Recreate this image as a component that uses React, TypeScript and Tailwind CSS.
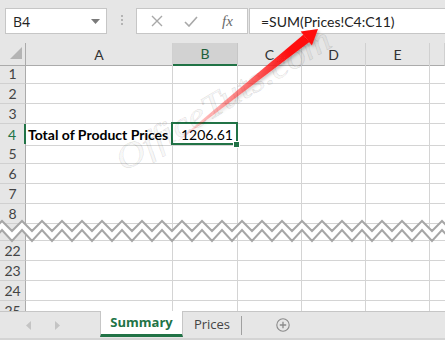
import React from "react";

const GRID = "grid grid-cols-[26px_147px_65px_64px_64px_64px_1fr]";
const cellFont = { fontFamily: "Lato, 'Liberation Sans', sans-serif" };
const uiFont = { fontFamily: "'Open Sans', 'Noto Sans', sans-serif" };

function Row({ label, h = "h-[20px]", children, selected = false, hideLabel = false }: { label: string; h?: string; children?: React.ReactNode; selected?: boolean; hideLabel?: boolean }) {
  return (
    <div className={`${GRID} ${h}`}>
      <div
        className={`flex items-center justify-center bg-[#e6e6e6] border-b border-b-[#d0d0d0] ${
          selected ? "border-r-2 border-r-[#217346] text-[#217346]" : "border-r border-r-[#ababab] text-[#444]"
        } text-[14px] leading-none`}
        style={cellFont}
      >
        {hideLabel ? "" : label}
      </div>
      {children ?? (
        <>
          <div className="border-r border-b border-[#d4d4d4]" />
          <div className="border-r border-b border-[#d4d4d4]" />
          <div className="border-r border-b border-[#d4d4d4]" />
          <div className="border-r border-b border-[#d4d4d4]" />
          <div className="border-r border-b border-[#d4d4d4]" />
          <div className="border-b border-[#d4d4d4]" />
        </>
      )}
    </div>
  );
}

function Zigzag() {
  const up: string[] = [];
  const lo: string[] = [];
  for (let x = -18; x <= 465; x += 20) {
    up.push(`${x},5`, `${x + 10},15`);
    lo.push(`${x},14`, `${x + 10},25`);
  }
  const loRev = [...lo].reverse();
  return (
    <svg className="absolute left-0 top-[216px] pointer-events-none" width="445" height="30" viewBox="0 0 445 30">
      <polygon points={[...up, ...loRev].join(" ")} fill="#ffffff" />
      <polyline points={up.join(" ")} fill="none" stroke="#a6a6a6" strokeWidth="2" />
      <polyline points={lo.join(" ")} fill="none" stroke="#a6a6a6" strokeWidth="2" />
    </svg>
  );
}

function Overlay() {
  return (
    <svg className="absolute left-0 top-0 pointer-events-none" width="445" height="340" viewBox="0 0 445 340">
      <defs>
        <linearGradient id="ag" gradientUnits="userSpaceOnUse" x1="178" y1="141" x2="318" y2="29">
          <stop offset="0" stopColor="#ff0000" stopOpacity="0.05" />
          <stop offset="0.45" stopColor="#ff2020" stopOpacity="0.55" />
          <stop offset="0.8" stopColor="#ff1010" stopOpacity="1" />
          <stop offset="1" stopColor="#ff0000" stopOpacity="1" />
        </linearGradient>
        <filter id="sh" x="-20%" y="-20%" width="140%" height="140%">
          <feDropShadow dx="1.5" dy="2" stdDeviation="1.5" floodColor="#000" floodOpacity="0.25" />
        </filter>
      </defs>
      <text
        x="124"
        y="172"
        transform="rotate(-31 124 172)"
        fontFamily="'Liberation Serif', serif"
        fontStyle="italic"
        fontSize="34"
        textLength="245"
        lengthAdjust="spacingAndGlyphs"
        fill="rgba(0,0,0,0.03)"
        stroke="rgba(0,0,0,0.13)"
        strokeWidth="0.7"
      >
        OfficeTuts.com
      </text>
      <g filter="url(#sh)">
        <polygon points="178.3,141.6 177.7,140.4 303.3,34.7 309.3,42.1" fill="url(#ag)" />
        <polygon points="318,29 300.7,31.4 311.9,45.4" fill="#ff0a0a" />
      </g>
    </svg>
  );
}

export default function App() {
  const emptyRows = ["1", "2", "3"];
  return (
    <div className="relative w-[445px] h-[340px] overflow-hidden bg-white select-none">
      {/* Toolbar */}
      <div className="h-[43px] bg-[#e6e6e6] flex items-start pt-[8px] pl-[5px]" style={uiFont}>
        <div className="w-[102px] h-[26px] bg-white border border-[#c6c6c6] flex items-center justify-between pl-[7px] pr-[6px]">
          <span className="text-[14px] text-[#222]">B4</span>
          <svg width="9" height="5" viewBox="0 0 9 5">
            <polygon points="0,0 9,0 4.5,5" fill="#7a7a7a" />
          </svg>
        </div>
        <div className="ml-[14px] mt-[7px] flex flex-col gap-[2px]">
          <div className="w-[2px] h-[2px] bg-[#b4b4b4]" />
          <div className="w-[2px] h-[2px] bg-[#b4b4b4]" />
          <div className="w-[2px] h-[2px] bg-[#b4b4b4]" />
        </div>
        <div className="ml-[13px] w-[112px] h-[26px] bg-white border border-[#c6c6c6] flex items-center">
          <svg className="ml-[14px]" width="12" height="12" viewBox="0 0 12 12">
            <path d="M1 1 L11 11 M11 1 L1 11" stroke="#a8a8a8" strokeWidth="1.4" fill="none" />
          </svg>
          <svg className="ml-[21px]" width="14" height="11" viewBox="0 0 14 11">
            <path d="M1 6 L5 10 L13 1" stroke="#a8a8a8" strokeWidth="1.6" fill="none" />
          </svg>
          <span
            className="ml-[24px] text-[15px] italic text-[#6a6a6a] leading-none"
            style={{ fontFamily: "'Liberation Serif', serif" }}
          >
            fx
          </span>
        </div>
        <div className="ml-[1px] flex-1 h-[26px] bg-white border border-r-0 border-[#c6c6c6] flex items-center pl-[11px]">
          <span className="text-[14px] text-[#222]" style={cellFont}>
            =SUM(Prices!C4:C11)
          </span>
        </div>
      </div>

      {/* Column headers */}
      <div className={`${GRID} h-[21px]`} style={cellFont}>
        <div className="relative bg-[#e6e6e6] border-r border-b border-[#ababab]">
          <svg className="absolute left-[10px] top-[4px]" width="12" height="12" viewBox="0 0 12 12">
            <polygon points="12,0 12,12 0,12" fill="#b4b4b4" />
          </svg>
        </div>
        {["A", "B", "C", "D", "E", ""].map((c) => (
          <div
            key={c || "F"}
            className={`flex items-center justify-center text-[14px] ${
              c === "B"
                ? "bg-[#d2d2d2] border-b-2 border-b-[#217346] text-[#1d5f3a] border-r border-r-[#c6c6c6]"
                : "bg-[#e6e6e6] border-b border-b-[#ababab] text-[#333] border-r border-r-[#d0d0d0]"
            }`}
          >
            {c}
          </div>
        ))}
      </div>

      {/* Rows */}
      {emptyRows.map((r) => (
        <Row key={r} label={r} />
      ))}
      <Row label="4" selected>
        <div className="border-r border-b border-[#d4d4d4] flex items-center pl-[2px]">
          <span className="text-[14px] font-bold text-black" style={cellFont}>
            Total of Product Prices
          </span>
        </div>
        <div className="relative border-r border-b border-[#d4d4d4] flex items-center justify-end pr-[4px]">
          <span className="text-[14px] text-black" style={cellFont}>
            1206.61
          </span>
          <div className="absolute left-[-2px] top-[-2px] w-[67px] h-[23px] border-2 border-[#217346]" />
          <div className="absolute left-[60px] top-[17px] w-[7px] h-[7px] bg-[#217346] border border-white" />
        </div>
        <div className="border-r border-b border-[#d4d4d4]" />
        <div className="border-r border-b border-[#d4d4d4]" />
        <div className="border-r border-b border-[#d4d4d4]" />
        <div className="border-b border-[#d4d4d4]" />
      </Row>
      {["5", "6", "7", "8"].map((r) => (
        <Row key={r} label={r} />
      ))}
      <Row label="21" h="h-[17px]" hideLabel />
      {["22", "23", "24"].map((r) => (
        <Row key={r} label={r} />
      ))}
      <div className="h-[10px] overflow-hidden">
        <Row label="25" />
      </div>

      {/* Tab bar */}
      <div className="h-[29px] bg-[#e6e6e6] border-t border-[#c6c6c6] flex items-start relative" style={uiFont}>
        <div className="w-[100px] h-[26px] flex items-center">
          <svg className="ml-[26px]" width="5" height="9" viewBox="0 0 5 9">
            <polygon points="5,0 5,9 0,4.5" fill="#c4c4c4" />
          </svg>
          <svg className="ml-[24px]" width="5" height="9" viewBox="0 0 5 9">
            <polygon points="0,0 0,9 5,4.5" fill="#c4c4c4" />
          </svg>
        </div>
        <div className="mt-[-1px] w-[83px] h-[26px] bg-white border-x border-[#c6c6c6] border-b-[3px] border-b-[#217346] flex items-center justify-center">
          <span className="text-[13px] font-bold text-[#217346]">Summary</span>
        </div>
        <div className="w-[58px] h-[25px] flex items-center justify-center">
          <span className="text-[13px] text-[#444]">Prices</span>
        </div>
        <div className="mt-[4px] w-px h-[19px] bg-[#a0a0a0]" />
        <svg className="ml-[34px] mt-[6px]" width="14" height="14" viewBox="0 0 14 14">
          <circle cx="7" cy="7" r="6.2" fill="none" stroke="#8a8a8a" strokeWidth="1.1" />
          <path d="M7 3.8 V10.2 M3.8 7 H10.2" stroke="#8a8a8a" strokeWidth="1.3" />
        </svg>
        <div className="absolute left-0 right-0 bottom-0 h-[2px] bg-[#d4d4d4]" />
      </div>

      <Zigzag />
      <Overlay />
    </div>
  );
}
